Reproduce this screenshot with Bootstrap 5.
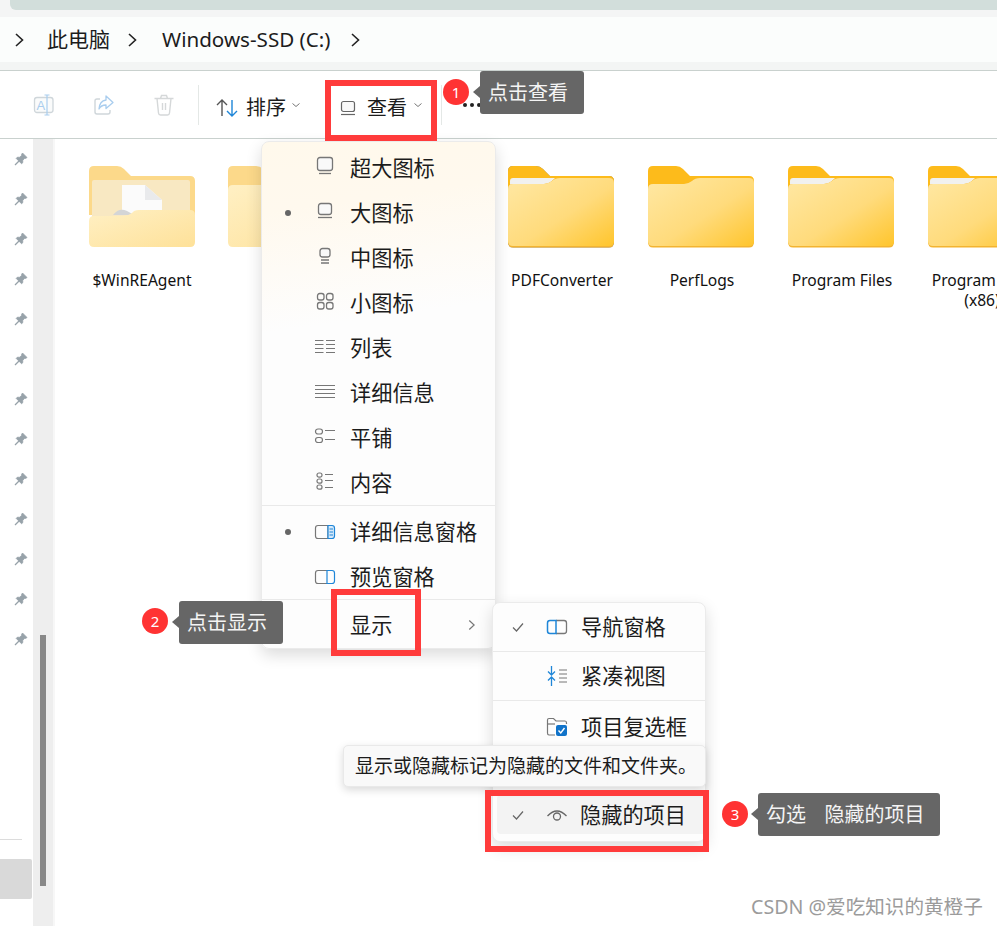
<!DOCTYPE html>
<html lang="zh-CN">
<head>
  <meta charset="UTF-8">
  <title>Windows-SSD (C:)</title>
  <link href="https://cdn.jsdelivr.net/npm/bootstrap@5.3.0/dist/css/bootstrap.min.css" rel="stylesheet">
  <style>
    body {
      height: 926px;
      overflow: hidden;
      position: relative;
      background: #fff;
      color: #1c1c1c;
      font-family: "Noto Sans", "Noto Sans CJK SC", sans-serif;
    }
    .top-strip { height: 17px; background: #f4f5f5; padding-left: 10px; }
    .top-strip div { height: 10px; background: #d2dedb; border-bottom-left-radius: 6px; }
    .address-row { height: 45px; background: #fbfdfc; font-size: 21px; }
    .address-row svg { flex: none; }
    .chev-first { margin: 0 22px 0 13px; }
    .chev-mid { margin: 0 24px 0 16px; }
    .chev-last { margin-left: 19px; }
    .drive-name { font-size: 20.600px; }
    .address-gap { height: 9px; background: #f3f5f4; border-bottom: 1px solid #c9d1ce; }
    .tool-row { height: 68px; border-bottom: 1px solid #c9d1ce; font-size: 20px; }
    .tool-btn { width: 60px; }
    .tool-first { margin-left: -2px; }
    .tool-sep { width: 1px; height: 40px; background: #e4e8e6; }
    .sort-btn, .view-btn { padding-top: 7px; }
    .sort-btn { margin-left: 17px; width: 110px; gap: 8px; }
    .view-btn { margin-left: 14px; width: 101px; gap: 11px; }
    .tool-caret { margin: 0 0 6px -3px; }
    .view-btn .tool-caret { margin-left: -5px; }
    .more-dots { margin-left: 21px; gap: 3px; margin-top: 1px; }
    .more-dots i { width: 4px; height: 4px; border-radius: 50%; background: #222; }
    .body-row { height: 787px; }
    .pin-col { width: 33px; flex: none; }
    .pin-slot { height: 40px; padding-left: 14px; }
    .pin-rule { width: 22px; height: 1px; background: #dcdcdc; margin-top: 180px; }
    .pin-pick { width: 32px; height: 40px; margin-top: 19px; background: #d9d9d9; border-radius: 0 2px 2px 0; }
    .scroll-col { width: 20px; flex: none; background: #eee; padding: 496px 7px 0; }
    .scroll-thumb { width: 6px; height: 251px; background: #888; }
    .scroll-edge { width: 2px; flex: none; background: #f7f7f7; }
    .folder-grid { padding: 26px 0 0 16px; }
    .folder-item { width: 140px; flex: none; font-size: 15.600px; line-height: 20px; text-align: center; color: #111; }
    .folder-item svg { display: block; margin: 0 auto 22px; }
    .folder-item p { width: 116px; margin: 0 auto; padding-left: 2px; }
    .folder-first svg { transform: translateX(1px); }
    .folder-picked svg { filter: drop-shadow(0 0 .6px #8a8a8a); }
    .flyout {
      z-index: auto;
      font-size: 21.200px;
      padding: 0;
      background: #fdfdfd;
      border: 1px solid #ebebeb;
      border-radius: 8px;
      box-shadow: 0 6px 16px rgba(0, 0, 0, .14);
      color: #1c1c1c;
    }
    .view-menu {
      left: 261px;
      top: 141px;
      width: 235px;
      height: 508px;
      padding-top: 3px;
      background: linear-gradient(172deg, #fff9ec 0, #fff9ee 70px, #fdfdfd 190px);
    }
    .show-menu { left: 492px; top: 602px; width: 214px; height: 240px; }
    .flyout .dropdown-item { padding: 0; height: 45px; color: inherit; line-height: 1; }
    .flyout .dropdown-divider { margin: 0; border-color: #e9e9e9; opacity: 1; }
    .mark-slot { width: 17px; margin-left: 23px; flex: none; }
    .mark-slot i { width: 6px; height: 6px; border-radius: 50%; background: #666; }
    .icon-slot { width: 24px; margin-left: 11px; margin-right: 13px; flex: none; }
    .arrow-right { margin-left: auto; margin-right: 19px; }
    .view-menu .pane-top { margin-top: 3px; }
    .view-menu .row-last { height: 48px; padding-top: 2px; }
    .show-menu .dropdown-item { height: 48px; }
    .show-menu .mark-slot { width: 20px; margin-left: 18px; }
    .show-menu .icon-slot { margin-left: 14px; margin-right: 12px; }
    .show-menu .row-tall { height: 50px; padding-top: 1px; }
    .show-menu .row-gap { height: 44px; }
    .show-menu .row-hover { height: 39px; margin: 0 4px; padding-top: 1px; background: #f3f3f3; border-radius: 4px; }
    .show-menu .row-hover .mark-slot { margin-left: 14px; }
    .show-menu .row-hover .icon-slot { margin-right: 11px; }
    .hint-box {
      left: 343px;
      top: 745px;
      width: 363px;
      height: 42px;
      padding-left: 11px;
      background: #f9f9f9;
      border: 1px solid #e9e9e9;
      border-radius: 5px;
      box-shadow: 0 3px 8px rgba(0, 0, 0, .15);
      font-size: 19px;
      white-space: nowrap;
    }
    .red-frame { border: 6px solid #ff3b3b; }
    .frame-view { left: 325px; top: 80px; width: 112px; height: 61px; }
    .frame-show { left: 331px; top: 589px; width: 90px; height: 67px; }
    .frame-hidden { left: 485px; top: 790px; width: 224px; height: 62px; }
    .step-dot {
      width: 26px;
      height: 26px;
      border-radius: 50%;
      background: #ff3333;
      color: #fff;
      font-size: 15px;
    }
    .dot-one { left: 443px; top: 79px; }
    .dot-two { left: 142px; top: 608px; }
    .dot-three { left: 722px; top: 801px; }
    .step-note {
      height: 43px;
      padding: 1px 0 0 8px;
      background: #666;
      color: #f4f4f4;
      border-radius: 3px;
      font-size: 20px;
      white-space: pre;
      word-spacing: 1px;
    }
    .step-note::before {
      content: "";
      position: absolute;
      left: -7px;
      top: 15px;
      border-style: solid;
      border-width: 6px 7px 6px 0;
      border-color: transparent #666 transparent transparent;
    }
    .note-one { left: 480px; top: 71px; width: 104px; }
    .note-two { left: 179px; top: 601px; width: 104px; }
    .note-three { left: 758px; top: 793px; width: 182px; }
    .watermark {
      left: 751px;
      top: 893px;
      font-size: 19.600px;
      line-height: 28px;
      color: #9b9b9b;
      white-space: nowrap;
    }
  </style>
</head>
<body>
  <svg width="0" height="0" class="position-absolute">
    <defs>
      <linearGradient id="frontFill" x1="0" y1="0" x2="1" y2="1">
        <stop offset="0" stop-color="#ffe8a4"/>
        <stop offset=".55" stop-color="#ffdb7c"/>
        <stop offset="1" stop-color="#ffc52c"/>
      </linearGradient>
      <linearGradient id="paleFill" x1="0" y1="0" x2="1" y2="1">
        <stop offset="0" stop-color="#fff0c4"/>
        <stop offset="1" stop-color="#fee199"/>
      </linearGradient>
      <symbol id="folderBack" viewBox="0 0 106 83">
        <path d="M0 6Q0 1 5 1H28Q32 1 35 4L42 11H101Q106 11 106 16V50H0Z" fill="#fdbb1b"/>
      </symbol>
      <symbol id="folderFront" viewBox="0 0 106 83">
        <path d="M0 24Q0 19 5 19H36Q40 19 44 16Q47 13 52 13H101Q106 13 106 18V77Q106 82.500 101 82.500H5Q0 82.500 0 77Z" fill="#f3b431"/>
        <path d="M0 24Q0 19 5 19H36Q40 19 44 16Q47 13 52 13H101Q106 13 106 18V76Q106 81 101 81H5Q0 81 0 76Z" fill="url(#frontFill)"/>
      </symbol>
      <symbol id="folderEmpty" viewBox="0 0 106 83">
        <use href="#folderBack"/>
        <use href="#folderFront"/>
      </symbol>
      <symbol id="folderFull" viewBox="0 0 106 83">
        <use href="#folderBack"/>
        <path d="M2 20V16Q2 13 5 13H47L40 20Z" fill="#f1f1ef"/>
        <use href="#folderFront"/>
      </symbol>
      <symbol id="pinMark" viewBox="0 0 14 14">
        <path d="M8.500 1 13 5.500 11.500 6.500 10.800 6.200 8.800 8.300 8.700 10.800 7.600 11.800 2.200 6.400 3.200 5.300 5.700 5.200 7.800 3.200 7.500 2.500Z" fill="#97a2a9" stroke="#97a2a9" stroke-width=".8" stroke-linejoin="round"/>
        <path d="M1 13 5 9" stroke="#97a2a9" stroke-width="1.300"/>
      </symbol>
      <symbol id="chevRight" viewBox="0 0 12 16">
        <path d="M3 2 9.500 8 3 14" fill="none" stroke="#222" stroke-width="1.600"/>
      </symbol>
      <symbol id="chevDown" viewBox="0 0 10 6">
        <path d="M1.500 1.500 5 4.500 8.500 1.500" fill="none" stroke="#777" stroke-width="1"/>
      </symbol>
      <symbol id="tickMark" viewBox="0 0 14 12">
        <path d="M2 6.500 5.500 10 12 2.500" fill="none" stroke="#666" stroke-width="1.200"/>
      </symbol>
    </defs>
  </svg>

  <div class="top-strip"><div></div></div>

  <div class="address-row d-flex align-items-center">
    <svg width="12" height="16" class="chev-first"><use href="#chevRight"/></svg>
    <span>此电脑</span>
    <svg width="12" height="16" class="chev-mid"><use href="#chevRight"/></svg>
    <span class="drive-name">Windows-SSD (C:)</span>
    <svg width="12" height="16" class="chev-last"><use href="#chevRight"/></svg>
  </div>
  <div class="address-gap"></div>

  <div class="tool-row d-flex align-items-center ps-3">
    <div class="tool-btn tool-first d-flex justify-content-center">
      <svg width="24" height="24" viewBox="0 0 24 24" fill="none">
        <rect x="2.500" y="4.500" width="18.500" height="15" rx="2.500" stroke="#cfd6da" stroke-width="1.300" fill="#fafbfb"/>
        <path d="M15 2V22M12.500 2H17.500M12.500 22H17.500" stroke="#a9cdee" stroke-width="1.200"/>
        <text x="4.500" y="17" font-size="13" fill="#a9cdee" font-family="Liberation Sans, sans-serif">A</text>
      </svg>
    </div>
    <div class="tool-btn d-flex justify-content-center">
      <svg width="24" height="24" viewBox="0 0 24 24" fill="none">
        <path d="M8 6H5Q3 6 3 8V19Q3 21 5 21H16Q18 21 18 19V17" stroke="#cfd6da" stroke-width="1.400"/>
        <path d="M14 3 21 9.500 14 15.500V12Q9 12 7 16Q7.500 8 14 7Z" stroke="#a9cdee" stroke-width="1.300" stroke-linejoin="round"/>
      </svg>
    </div>
    <div class="tool-btn d-flex justify-content-center">
      <svg width="24" height="24" viewBox="0 0 24 24" fill="none" stroke="#d5d8d9" stroke-width="1.400">
        <path d="M2.500 5.500H21.500M8.500 5.500 9.500 2.500H14.500L15.500 5.500M5 5.500 6.500 20Q6.700 22 8.500 22H15.500Q17.300 22 17.500 20L19 5.500M10.500 10V17M13.500 10V17"/>
      </svg>
    </div>
    <div class="tool-sep ms-1"></div>
    <div class="sort-btn d-flex align-items-center">
      <svg width="22" height="18" viewBox="0 0 22 18" fill="none" stroke-width="1.400">
        <path d="M6 17V1M1 6 6 1 11 6" stroke="#555"/>
        <path d="M16 1V17M11 12 16 17 21 12" stroke="#1f86d8"/>
      </svg>
      <span>排序</span>
      <svg width="10" height="6" class="tool-caret"><use href="#chevDown"/></svg>
    </div>
    <div class="view-btn d-flex align-items-center">
      <svg width="16" height="16" viewBox="0 0 16 16" fill="none" stroke="#666" stroke-width="1.200">
        <rect x="1.500" y="1.500" width="13" height="10" rx="2" fill="#f9f9f9"/>
        <path d="M1 14.500H15"/>
      </svg>
      <span>查看</span>
      <svg width="10" height="6" class="tool-caret"><use href="#chevDown"/></svg>
    </div>
    <div class="tool-sep"></div>
    <div class="more-dots d-flex"><i></i><i></i><i></i></div>
  </div>

  <div class="body-row d-flex">
    <div class="pin-col" id="pinCol"></div>
    <div class="scroll-col"><div class="scroll-thumb"></div></div>
    <div class="scroll-edge"></div>
    <div class="folder-grid d-flex flex-nowrap">
      <div class="folder-item folder-first">
        <svg width="106" height="83" viewBox="0 0 106 83">
          <path d="M0 6Q0 1 5 1H28Q32 1 35 4L42 11H101Q106 11 106 16V50H0Z" fill="#fcd98a"/>
          <rect x="3" y="15" width="98" height="50" rx="2" fill="#f8e8c2"/>
          <path d="M33 20H56L73 35V50H33Z" fill="#fbfbfb"/>
          <path d="M56 20V35H73Z" fill="#e9eaec"/>
          <path d="M24 50Q30 42 38 46L45 50Z" fill="#d4d5d6"/>
          <path d="M0 56Q0 51 5 51H34Q39 51 43 48Q45 45 50 45H101Q106 45 106 50V77Q106 82 101 82H5Q0 82 0 77Z" fill="url(#paleFill)"/>
        </svg>
        <p>$WinREAgent</p>
      </div>
      <div class="folder-item">
        <svg width="106" height="83" viewBox="0 0 106 83">
          <path d="M0 6Q0 1 5 1H28Q32 1 35 4L42 11H101Q106 11 106 16V50H0Z" fill="#fcd98a"/>
          <path d="M0 25Q0 20 5 20H101Q106 20 106 25V77Q106 82 101 82H5Q0 82 0 77Z" fill="url(#paleFill)"/>
        </svg>
      </div>
      <div class="folder-item">
        <svg width="106" height="83"><use href="#folderFull"/></svg>
      </div>
      <div class="folder-item folder-picked">
        <svg width="106" height="83"><use href="#folderFull"/></svg>
        <p>PDFConverter</p>
      </div>
      <div class="folder-item">
        <svg width="106" height="83"><use href="#folderEmpty"/></svg>
        <p>PerfLogs</p>
      </div>
      <div class="folder-item">
        <svg width="106" height="83"><use href="#folderFull"/></svg>
        <p>Program Files</p>
      </div>
      <div class="folder-item">
        <svg width="106" height="83"><use href="#folderFull"/></svg>
        <p>Program Files (x86)</p>
      </div>
    </div>
  </div>

  <!-- 查看 menu -->
  <ul class="dropdown-menu show flyout view-menu list-unstyled mb-0">
    <li class="dropdown-item d-flex align-items-center">
      <span class="mark-slot"></span>
      <svg class="icon-slot" width="24" height="24" viewBox="0 0 24 24" fill="none" stroke="#777" stroke-width="1.300"><rect x="4.500" y="1.500" width="15" height="13" rx="2.500" fill="#f9f9f9"/><path d="M6 17.500H18"/></svg>
      超大图标
    </li>
    <li class="dropdown-item d-flex align-items-center">
      <span class="mark-slot d-flex"><i></i></span>
      <svg class="icon-slot" width="24" height="24" viewBox="0 0 24 24" fill="none" stroke="#777" stroke-width="1.300"><rect x="5.500" y="2.500" width="13" height="11" rx="2.500" fill="#f9f9f9"/><path d="M5 16.500H19"/></svg>
      大图标
    </li>
    <li class="dropdown-item d-flex align-items-center">
      <span class="mark-slot"></span>
      <svg class="icon-slot" width="24" height="24" viewBox="0 0 24 24" fill="none" stroke="#777" stroke-width="1.300"><rect x="7" y="2.500" width="10" height="8.500" rx="2.500" fill="#f9f9f9"/><path d="M8 14H16M8 17H16"/></svg>
      中图标
    </li>
    <li class="dropdown-item d-flex align-items-center">
      <span class="mark-slot"></span>
      <svg class="icon-slot" width="24" height="24" viewBox="0 0 24 24" fill="none" stroke="#777" stroke-width="1.300"><rect x="4.500" y="2.500" width="6.500" height="6.500" rx="2.200"/><rect x="13.500" y="2.500" width="6.500" height="6.500" rx="2.200"/><rect x="4.500" y="11.500" width="6.500" height="6.500" rx="2.200"/><rect x="13.500" y="11.500" width="6.500" height="6.500" rx="2.200"/></svg>
      小图标
    </li>
    <li class="dropdown-item d-flex align-items-center">
      <span class="mark-slot"></span>
      <svg class="icon-slot" width="24" height="24" viewBox="0 0 24 24" fill="none" stroke="#777" stroke-width="1"><path d="M2 4.500H10.500M2 8.500H10.500M2 12.500H10.500M2 16.500H10.500M13 4.500H22M13 8.500H22M13 12.500H22M13 16.500H22"/></svg>
      列表
    </li>
    <li class="dropdown-item d-flex align-items-center">
      <span class="mark-slot"></span>
      <svg class="icon-slot" width="24" height="24" viewBox="0 0 24 24" fill="none" stroke="#777" stroke-width="1"><path d="M2 4.500H22M2 8.500H22M2 12.500H22M2 16.500H22"/></svg>
      详细信息
    </li>
    <li class="dropdown-item d-flex align-items-center">
      <span class="mark-slot"></span>
      <svg class="icon-slot" width="24" height="24" viewBox="0 0 24 24" fill="none" stroke="#777" stroke-width="1.200"><rect x="2.500" y="3" width="7" height="5" rx="2.500"/><rect x="2.500" y="11.500" width="7" height="5" rx="2.500"/><path d="M12 4.500H22M12 13.500H22"/></svg>
      平铺
    </li>
    <li class="dropdown-item d-flex align-items-center">
      <span class="mark-slot"></span>
      <svg class="icon-slot" width="24" height="24" viewBox="0 0 24 24" fill="none" stroke="#777" stroke-width="1.200"><rect x="4" y="2" width="5" height="4.200" rx="2"/><rect x="4" y="8" width="5" height="4.200" rx="2"/><rect x="4" y="14" width="5" height="4.200" rx="2"/><path d="M12 3.500H20M12 9.500H20M12 16.500H20"/></svg>
      内容
    </li>
    <li><hr class="dropdown-divider"></li>
    <li class="dropdown-item d-flex align-items-center pane-top">
      <span class="mark-slot d-flex"><i></i></span>
      <svg class="icon-slot" width="24" height="24" viewBox="0 0 24 24" fill="none"><path d="M15 5.500H5Q2.500 5.500 2.500 8V16Q2.500 18.500 5 18.500H15Z" stroke="#777" stroke-width="1.200"/><path d="M15 5.500H19Q21.500 5.500 21.500 8V16Q21.500 18.500 19 18.500H15Z" stroke="#1f86d8" stroke-width="1.200" fill="#d8eafa"/><path d="M16.500 9H20M16.500 12H20M16.500 15H20" stroke="#1f86d8" stroke-width="1.200"/></svg>
      详细信息窗格
    </li>
    <li class="dropdown-item d-flex align-items-center">
      <span class="mark-slot"></span>
      <svg class="icon-slot" width="24" height="24" viewBox="0 0 24 24" fill="none" stroke-width="1.200"><path d="M14 5.500H5Q2.500 5.500 2.500 8V16Q2.500 18.500 5 18.500H14" stroke="#777"/><path d="M14 5.500H19Q21.500 5.500 21.500 8V16Q21.500 18.500 19 18.500H14V5.500Z" stroke="#1f86d8"/></svg>
      预览窗格
    </li>
    <li><hr class="dropdown-divider"></li>
    <li class="dropdown-item row-last d-flex align-items-center">
      <span class="mark-slot"></span>
      <span class="icon-slot"></span>
      显示
      <svg class="arrow-right" width="9" height="12" viewBox="0 0 12 16"><path d="M3 2 9.500 8 3 14" fill="none" stroke="#777" stroke-width="1.600"/></svg>
    </li>
  </ul>

  <!-- 显示 submenu -->
  <ul class="dropdown-menu show flyout show-menu list-unstyled mb-0">
    <li class="dropdown-item d-flex align-items-center">
      <span class="mark-slot"><svg width="14" height="12" class="d-block"><use href="#tickMark"/></svg></span>
      <svg class="icon-slot" width="24" height="24" viewBox="0 0 24 24" fill="none" stroke-width="1.300"><path d="M11 5.500H19Q21.500 5.500 21.500 8V16Q21.500 18.500 19 18.500H11" stroke="#777"/><path d="M11 5.500H5Q2.500 5.500 2.500 8V16Q2.500 18.500 5 18.500H11V5.500Z" stroke="#1f86d8" stroke-width="1.500"/></svg>
      导航窗格
    </li>
    <li><hr class="dropdown-divider"></li>
    <li class="dropdown-item d-flex align-items-center">
      <span class="mark-slot"></span>
      <svg class="icon-slot" width="24" height="24" viewBox="0 0 24 24" fill="none" stroke-width="1.300"><path d="M6.500 2V10.500M3 7.500 6.500 11 10 7.500M6.500 22V13.500M3 16.500 6.500 13 10 16.500" stroke="#1f86d8"/><path d="M14 6H22M14 10H22M14 14H22M14 18H22" stroke="#777" stroke-width="1"/></svg>
      紧凑视图
    </li>
    <li><hr class="dropdown-divider"></li>
    <li class="dropdown-item row-tall d-flex align-items-center">
      <span class="mark-slot"></span>
      <svg class="icon-slot" width="24" height="24" viewBox="0 0 24 24" fill="none"><path d="M10 20H4Q2.500 20 2.500 18V5Q2.500 3.500 4 3.500H8.500L11 6H20Q21.500 6 21.500 8V9" stroke="#777" stroke-width="1.200"/><path d="M2.500 9H10" stroke="#777" stroke-width="1.200"/><rect x="11" y="10" width="11" height="11" rx="2" fill="#1173c9"/><path d="M13.500 15.500 15.800 18 19.500 13" stroke="#fff" stroke-width="1.400"/></svg>
      项目复选框
    </li>
    <li class="row-gap"></li>
    <li class="dropdown-item row-hover d-flex align-items-center">
      <span class="mark-slot"><svg width="14" height="12" class="d-block"><use href="#tickMark"/></svg></span>
      <svg class="icon-slot" width="24" height="24" viewBox="0 0 24 24" fill="none" stroke="#666" stroke-width="1.300"><path d="M2.500 13Q12 3 21.500 13"/><circle cx="12" cy="13.500" r="3.500"/></svg>
      隐藏的项目
    </li>
  </ul>

  <div class="hint-box position-absolute d-flex align-items-center">显示或隐藏标记为隐藏的文件和文件夹。</div>

  <div class="red-frame frame-view position-absolute"></div>
  <div class="red-frame frame-show position-absolute"></div>
  <div class="red-frame frame-hidden position-absolute"></div>

  <div class="step-dot dot-one position-absolute d-flex align-items-center justify-content-center">1</div>
  <div class="step-note note-one position-absolute d-flex align-items-center">点击查看</div>
  <div class="step-dot dot-two position-absolute d-flex align-items-center justify-content-center">2</div>
  <div class="step-note note-two position-absolute d-flex align-items-center">点击显示</div>
  <div class="step-dot dot-three position-absolute d-flex align-items-center justify-content-center">3</div>
  <div class="step-note note-three position-absolute d-flex align-items-center">勾选   隐藏的项目</div>

  <div class="watermark position-absolute">CSDN @爱吃知识的黄橙子</div>

  <script>
    // 13 pinned rows in the quick access column
    const pinCol = document.getElementById('pinCol');
    let pinHtml = '';
    for (let i = 0; i < 13; i++) {
      pinHtml += '<div class="pin-slot d-flex align-items-center"><svg width="14" height="14"><use href="#pinMark"/></svg></div>';
    }
    pinCol.innerHTML = pinHtml + '<div class="pin-rule"></div><div class="pin-pick"></div>';
  </script>
  <script src="https://cdn.jsdelivr.net/npm/bootstrap@5.3.0/dist/js/bootstrap.bundle.min.js"></script>
</body>
</html>
